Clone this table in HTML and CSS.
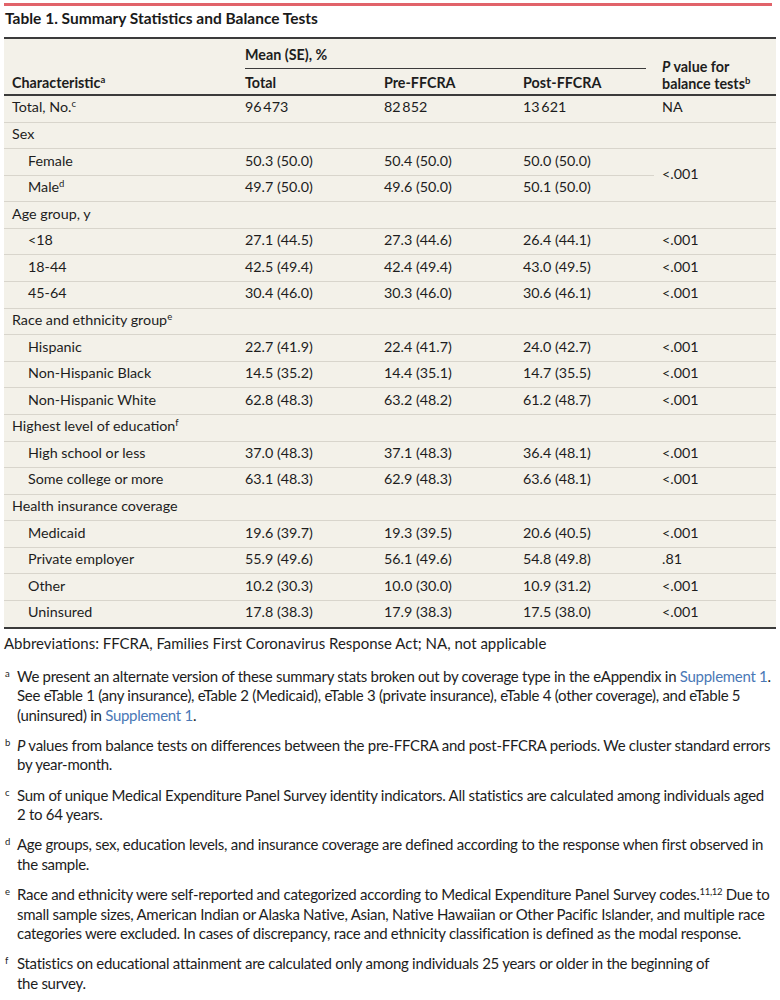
FILE: index.html
```html
<!DOCTYPE html>
<html lang="en">
<head>
<meta charset="utf-8">
<title>Table 1. Summary Statistics and Balance Tests</title>
<link rel="stylesheet" href="styles.css">
</head>
<body>
<div class="page">
  <div class="redbar"></div>
  <h1 class="title">Table 1. Summary Statistics and Balance Tests</h1>
  <table class="stats">
    <colgroup>
      <col class="c-char"><col class="c-num"><col class="c-num"><col class="c-num"><col class="c-p">
    </colgroup>
    <thead>
      <tr class="h1">
        <th rowspan="2" class="char">Characteristic<sup>a</sup></th>
        <th colspan="3" class="group"><div class="group-label">Mean (SE), %</div></th>
        <th rowspan="2" class="pval"><i>P</i> value for<br>balance tests<sup>b</sup></th>
      </tr>
      <tr class="h2">
        <th>Total</th><th>Pre-FFCRA</th><th>Post-FFCRA</th>
      </tr>
    </thead>
    <tbody>
      <tr><td>Total, No.<sup>c</sup></td><td>96&#8201;473</td><td>82&#8201;852</td><td>13&#8201;621</td><td>NA</td></tr>
      <tr><td colspan="5">Sex</td></tr>
      <tr><td class="sub">Female</td><td>50.3 (50.0)</td><td>50.4 (50.0)</td><td>50.0 (50.0)</td><td rowspan="2" class="mid">&lt;.001</td></tr>
      <tr><td class="sub">Male<sup>d</sup></td><td>49.7 (50.0)</td><td>49.6 (50.0)</td><td>50.1 (50.0)</td></tr>
      <tr><td colspan="5">Age group, y</td></tr>
      <tr><td class="sub">&lt;18</td><td>27.1 (44.5)</td><td>27.3 (44.6)</td><td>26.4 (44.1)</td><td>&lt;.001</td></tr>
      <tr><td class="sub">18-44</td><td>42.5 (49.4)</td><td>42.4 (49.4)</td><td>43.0 (49.5)</td><td>&lt;.001</td></tr>
      <tr><td class="sub">45-64</td><td>30.4 (46.0)</td><td>30.3 (46.0)</td><td>30.6 (46.1)</td><td>&lt;.001</td></tr>
      <tr><td colspan="5">Race and ethnicity group<sup>e</sup></td></tr>
      <tr><td class="sub">Hispanic</td><td>22.7 (41.9)</td><td>22.4 (41.7)</td><td>24.0 (42.7)</td><td>&lt;.001</td></tr>
      <tr><td class="sub">Non-Hispanic Black</td><td>14.5 (35.2)</td><td>14.4 (35.1)</td><td>14.7 (35.5)</td><td>&lt;.001</td></tr>
      <tr><td class="sub">Non-Hispanic White</td><td>62.8 (48.3)</td><td>63.2 (48.2)</td><td>61.2 (48.7)</td><td>&lt;.001</td></tr>
      <tr><td colspan="5">Highest level of education<sup>f</sup></td></tr>
      <tr><td class="sub">High school or less</td><td>37.0 (48.3)</td><td>37.1 (48.3)</td><td>36.4 (48.1)</td><td>&lt;.001</td></tr>
      <tr><td class="sub">Some college or more</td><td>63.1 (48.3)</td><td>62.9 (48.3)</td><td>63.6 (48.1)</td><td>&lt;.001</td></tr>
      <tr><td colspan="5">Health insurance coverage</td></tr>
      <tr><td class="sub">Medicaid</td><td>19.6 (39.7)</td><td>19.3 (39.5)</td><td>20.6 (40.5)</td><td>&lt;.001</td></tr>
      <tr><td class="sub">Private employer</td><td>55.9 (49.6)</td><td>56.1 (49.6)</td><td>54.8 (49.8)</td><td>.81</td></tr>
      <tr><td class="sub">Other</td><td>10.2 (30.3)</td><td>10.0 (30.0)</td><td>10.9 (31.2)</td><td>&lt;.001</td></tr>
      <tr><td class="sub">Uninsured</td><td>17.8 (38.3)</td><td>17.9 (38.3)</td><td>17.5 (38.0)</td><td>&lt;.001</td></tr>
    </tbody>
  </table>
  <div class="notes">
    <p class="abbr">Abbreviations: FFCRA, Families First Coronavirus Response Act; NA, not applicable</p>
    <div class="note"><sup class="mark">a</sup><p>We present an alternate version of these summary stats broken out by coverage type in the eAppendix in <a href="#s1">Supplement 1</a>.<br>See eTable 1 (any insurance), eTable 2 (Medicaid), eTable 3 (private insurance), eTable 4 (other coverage), and eTable 5<br>(uninsured) in <a href="#s1">Supplement 1</a>.</p></div>
    <div class="note"><sup class="mark">b</sup><p><i>P</i> values from balance tests on differences between the pre-FFCRA and post-FFCRA periods. We cluster standard errors<br>by year-month.</p></div>
    <div class="note"><sup class="mark">c</sup><p>Sum of unique Medical Expenditure Panel Survey identity indicators. All statistics are calculated among individuals aged<br>2 to 64 years.</p></div>
    <div class="note"><sup class="mark">d</sup><p>Age groups, sex, education levels, and insurance coverage are defined according to the response when first observed in<br>the sample.</p></div>
    <div class="note"><sup class="mark">e</sup><p>Race and ethnicity were self-reported and categorized according to Medical Expenditure Panel Survey codes.<sup>11,12</sup> Due to<br>small sample sizes, American Indian or Alaska Native, Asian, Native Hawaiian or Other Pacific Islander, and multiple race<br>categories were excluded. In cases of discrepancy, race and ethnicity classification is defined as the modal response.</p></div>
    <div class="note"><sup class="mark">f</sup><p>Statistics on educational attainment are calculated only among individuals 25 years or older in the beginning of<br>the survey.</p></div>
  </div>
</div>
</body>
</html>
```

FILE: styles.css
```css
html, body {
  margin: 0;
  padding: 0;
  background: #ffffff;
}

body {
  font-family: Lato, "Open Sans", "Liberation Sans", sans-serif;
  color: #1d1d1d;
}

.page {
  width: 772px;
  margin: 0 4px;
  padding-top: 3px;
}

.redbar {
  height: 3px;
  width: 768px;
  background: #e1636a;
}

.title {
  margin: 0;
  padding: 2px 0 9px 1px;
  font-size: 15.5px;
  line-height: 20px;
  font-weight: 700;
  color: #1a1a1a;
}

.stats {
  width: 772px;
  border-collapse: collapse;
  table-layout: fixed;
  background: #f3f1e9;
  font-size: 14.3px;
  border-top: 2px solid #3b3b3b;
  border-bottom: 2px solid #3b3b3b;
}

.c-char { width: 233px; }
.c-num { width: 139px; }
.c-p { width: 122px; }

.stats th {
  text-align: left;
  font-weight: 700;
  padding: 0 8px;
  vertical-align: bottom;
  line-height: 18px;
}

.stats .h1 th.group {
  padding-top: 7px;
}

.group-label {
  padding-bottom: 4px;
  border-bottom: 1px solid #3b3b3b;
}

.stats .h2 th,
.stats th.char,
.stats th.pval {
  padding-bottom: 2px;
  border-bottom: 2px solid #3b3b3b;
}

.stats .h2 th {
  padding-top: 5px;
}

.stats th.pval {
  line-height: 17px;
}

.stats td {
  padding: 2.4px 8px 5.2px;
  line-height: 18px;
  border-bottom: 1px solid #d8d5cc;
  vertical-align: middle;
  white-space: nowrap;
}

.stats td.sub {
  padding-left: 24px;
}

.stats sup,
.notes p sup {
  font-size: 9.5px;
  line-height: 0;
  vertical-align: 5px;
}

.notes {
  font-size: 15px;
  line-height: 19.6px;
  color: #1d1d1d;
}

.notes p {
  margin: 0;
}

.notes .abbr {
  padding: 4px 0 14px;
  line-height: 20px;
}

.note {
  display: grid;
  grid-template-columns: 13px 1fr;
  margin-bottom: 10.5px;
  letter-spacing: -0.28px;
}

.note p {
  white-space: nowrap;
}

.note .mark {
  font-size: 9.5px;
  line-height: 14px;
  vertical-align: top;
  padding-left: 1px;
  letter-spacing: 0;
}

.notes a {
  color: #4a78b6;
  text-decoration: none;
}
```
